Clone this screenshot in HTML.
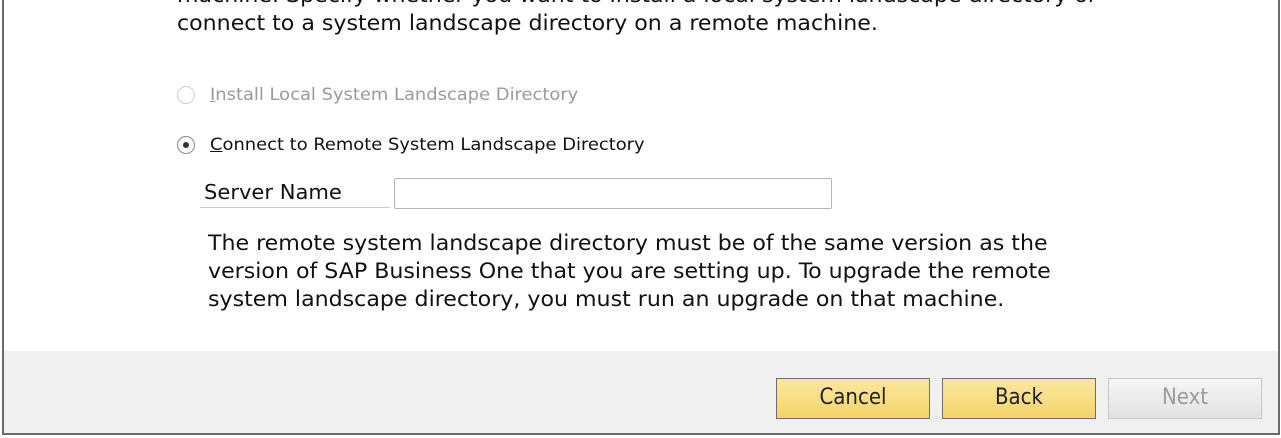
<!DOCTYPE html>
<html><head><style>
body{margin:0;width:1281px;height:438px;overflow:hidden;background:#fff;font-family:"DejaVu Sans Condensed","Liberation Sans",sans-serif;position:relative}
.a{position:absolute;white-space:nowrap;color:#111;transform-origin:0 0;transform:scaleX(1.17)}
.frame{position:absolute;left:2px;top:-2px;width:1274px;height:435px;border:2px solid #6a6a6a;border-top:none;background:#fff}
.gray{position:absolute;left:4px;top:351px;width:1274px;height:82px;background:#f0f0f0}
.radio{position:absolute;width:16px;height:16px;border:1px solid #b8b8b8;border-radius:50%;background:#fff}
.btn{position:absolute;top:378px;width:152px;height:39px;border:1px solid #6e6e6e;background:linear-gradient(#fbe7a0,#f5d468);font-size:22px;text-align:center;line-height:38px;color:#222}
</style></head><body>
<div class="frame"></div>
<div class="gray"></div>
<div class="a" style="left:177px;top:-19px;font-size:21px;line-height:28px">machine. Specify whether you want to install a local system landscape directory or<br>connect to a system landscape directory on a remote machine.</div>
<div class="radio" style="left:177px;top:86px;border-color:#d0d0d0"></div>
<div class="a" style="left:210px;top:85px;font-size:17px;color:#9a9a9a"><u>I</u>nstall Local System Landscape Directory</div>
<div class="radio" style="left:177px;top:136px;border-color:#888"><div style="position:absolute;left:5px;top:5px;width:6px;height:6px;border-radius:50%;background:#333"></div></div>
<div class="a" style="left:210px;top:135px;font-size:17px"><u>C</u>onnect to Remote System Landscape Directory</div>
<div class="a" style="left:204px;top:180px;font-size:20px">Server Name</div>
<div style="position:absolute;left:200px;top:207px;width:190px;height:1px;background:#ccc"></div>
<div style="position:absolute;left:394px;top:178px;width:436px;height:29px;border:1px solid #b5b5b5;border-radius:2px;background:#fff"></div>
<div class="a" style="left:208px;top:229px;font-size:21px;line-height:28px">The remote system landscape directory must be of the same version as the<br>version of SAP Business One that you are setting up. To upgrade the remote<br>system landscape directory, you must run an upgrade on that machine.</div>
<div class="btn" style="left:776px">Cancel</div>
<div class="btn" style="left:942px">Back</div>
<div class="btn" style="left:1108px;border-color:#c8c8c8;background:linear-gradient(#f6f6f6,#e2e2e2);color:#9a9a9a">Next</div>
</body></html>
